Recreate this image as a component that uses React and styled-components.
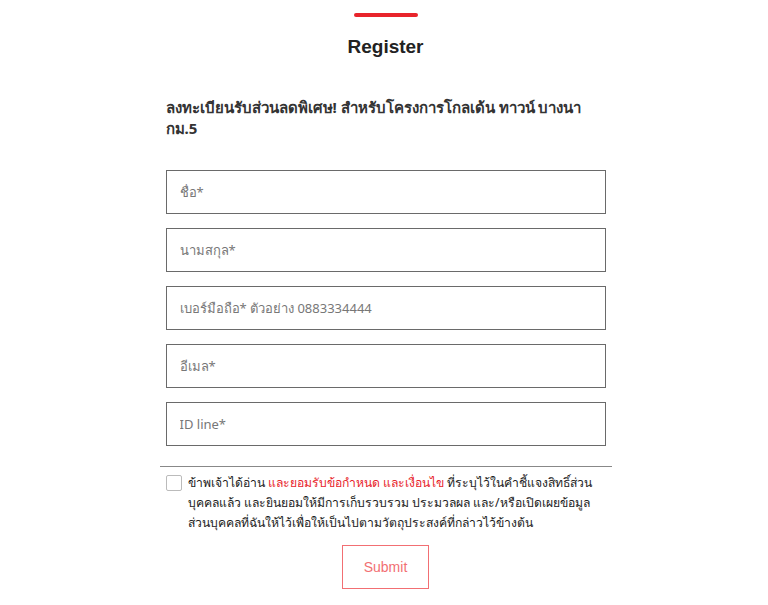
import React from "react";
import styled, { createGlobalStyle } from "styled-components";

const GlobalStyle = createGlobalStyle`
  body {
    margin: 0;
    background: #fff;
    font-family: "Noto Sans", "Liberation Sans", sans-serif;
  }
`;

const StyledRegister = styled.div`
  width: 440px;
  margin: 0 auto;
  padding: 13px 0 0 3px;
  display: flex;
  flex-direction: column;
  align-items: center;
  color: #222;
  .red-line {
    width: 64px;
    height: 4px;
    border-radius: 4px;
    background: #e8242b;
  }
  h1 {
    margin: 17px 0 0;
    font-size: 19px;
    font-weight: 700;
    line-height: 26px;
    color: #222;
    font-family: "Liberation Sans", Arial, sans-serif;
  }
  h3 {
    align-self: stretch;
    margin: 37px 0 0;
    font-size: 15px;
    font-weight: 700;
    line-height: 21px;
    color: #333;
  }
`;

const Fields = styled.div`
  align-self: stretch;
  display: flex;
  flex-direction: column;
  gap: 14px;
  margin-top: 31px;
`;

const Field = styled.input`
  box-sizing: border-box;
  width: 100%;
  height: 44px;
  padding: 0 13px;
  border: 1px solid #6a6a6a;
  border-radius: 0;
  font-family: "Noto Sans", "Liberation Sans", sans-serif;
  font-size: 13px;
  color: #333;
  outline: none;
  &::placeholder {
    color: #777;
  }
`;

const Consent = styled.div`
  width: 452px;
  margin-top: 20px;
  border-top: 1px solid #888;
  padding: 6px 0 0 6px;
  display: flex;
  gap: 6px;
  box-sizing: border-box;
  .box {
    flex: none;
    width: 14px;
    height: 14px;
    margin-top: 2px;
    border: 1px solid #bbb;
    border-radius: 2px;
  }
  p {
    margin: 0;
    font-size: 12.2px;
    line-height: 20px;
    color: #222;
    white-space: nowrap;
  }
  span {
    color: #e8242b;
  }
`;

const SubmitButton = styled.button`
  margin-top: 12px;
  width: 87px;
  height: 44px;
  background: #fff;
  border: 1px solid #f26f73;
  color: #f26f73;
  font-family: "Liberation Sans", Arial, sans-serif;
  font-size: 14px;
  cursor: pointer;
`;

const fields = [
  "ชื่อ*",
  "นามสกุล*",
  "เบอร์มือถือ* ตัวอย่าง 0883334444",
  "อีเมล*",
  "ID line*",
];

export default function App() {
  return (
    <>
      <GlobalStyle />
      <StyledRegister>
        <div className="red-line" />
        <h1>Register</h1>
        <h3>ลงทะเบียนรับส่วนลดพิเศษ! สำหรับโครงการโกลเด้น ทาวน์ บางนา กม.5</h3>
        <Fields>
          {fields.map((f) => (
            <Field key={f} placeholder={f} />
          ))}
        </Fields>
        <Consent>
          <div className="box" />
          <p>
            ข้าพเจ้าได้อ่าน <span>และยอมรับข้อกำหนด และเงื่อนไข</span>{" "}
            ที่ระบุไว้ในคำชี้แจงสิทธิ์ส่วน
            <br />
            บุคคลแล้ว และยินยอมให้มีการเก็บรวบรวม ประมวลผล และ/หรือเปิดเผยข้อมูล
            <br />
            ส่วนบุคคลที่ฉันให้ไว้เพื่อให้เป็นไปตามวัตถุประสงค์ที่กล่าวไว้ข้างต้น
          </p>
        </Consent>
        <SubmitButton>Submit</SubmitButton>
      </StyledRegister>
    </>
  );
}
